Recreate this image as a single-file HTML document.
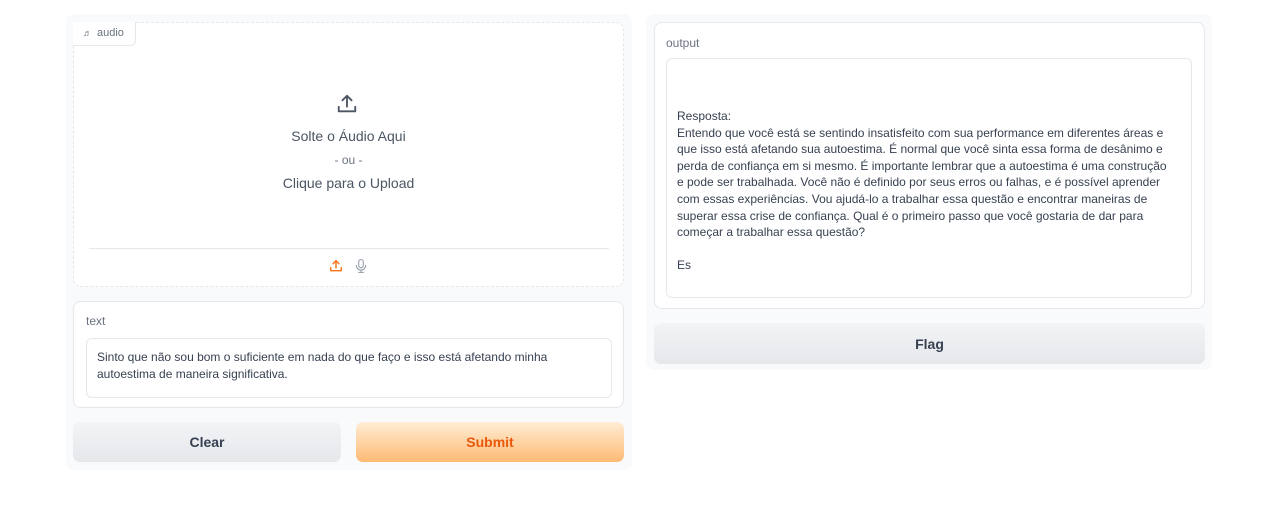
<!DOCTYPE html>
<html><head><meta charset="utf-8"><style>
*{box-sizing:border-box;margin:0;padding:0}
body{width:1280px;height:512px;background:#fff;font-family:"Liberation Sans",sans-serif;color:#374151;position:relative;overflow:hidden}
.abs{position:absolute}
.panel{background:#f9fafb;border-radius:8px}
.box{background:#fff;border:1px solid #e5e7eb;border-radius:8px}
.lbl{font-size:12px;color:#6b7280}
.ta{background:#fff;border:1px solid #e5e7eb;border-radius:6px;font-size:12px;color:#374151;line-height:16.6px}
.btn{border-radius:7px;font-size:14px;font-weight:bold;display:flex;align-items:center;justify-content:center}
</style></head><body>
<div class="abs panel" style="left:66px;top:14px;width:566px;height:456px"></div>
<div class="abs panel" style="left:646px;top:14px;width:566px;height:356px"></div>

<div class="abs" style="left:73px;top:22px;width:551px;height:265px;background:#fff;border:1px dashed #e5e7eb;border-radius:8px"></div>
<div class="abs" style="left:73px;top:22px;width:63px;height:24px;background:#fff;border:1px solid #e5e7eb;border-radius:0 0 6px 0;border-top:none;border-left:none;font-size:11px;color:#6b7280;padding:5px 0 0 10px"><span style="font-size:9px;margin-right:5px">♬</span>audio</div>
<svg class="abs" style="left:336px;top:93px" width="22" height="22" viewBox="0 0 24 24" fill="none" stroke="#4b5563" stroke-width="2" stroke-linecap="round" stroke-linejoin="round"><path d="M3 15v5h18v-5M12 15V3M7 8l5-5 5 5"/></svg>
<div class="abs" style="left:73px;top:125px;width:551px;text-align:center;font-size:14px;color:#4b5563;line-height:23px">Solte o Áudio Aqui<br><span style="font-size:12px;color:#6b7280">- ou -</span><br>Clique para o Upload</div>
<div class="abs" style="left:89px;top:248px;width:520px;height:1px;background:#e5e7eb"></div>
<svg class="abs" style="left:329px;top:259px" width="14" height="14" viewBox="0 0 24 24" fill="none" stroke="#f97316" stroke-width="2.5" stroke-linecap="round" stroke-linejoin="round"><path d="M3 15v5h18v-5M12 15V3M7 8l5-5 5 5"/></svg>
<svg class="abs" style="left:354px;top:258px" width="14" height="16" viewBox="0 0 24 26" fill="none" stroke="#9ca3af" stroke-width="2" stroke-linecap="round"><rect x="8" y="2" width="8" height="14" rx="4"/><path d="M4 12a8 8 0 0 0 16 0M12 20v4M8 24h8"/></svg>

<div class="abs box" style="left:73px;top:301px;width:551px;height:107px"></div>
<div class="abs lbl" style="left:86px;top:314px">text</div>
<div class="abs ta" style="left:86px;top:338px;width:526px;height:60px;padding:10px 10px">Sinto que não sou bom o suficiente em nada do que faço e isso está afetando minha autoestima de maneira significativa.</div>

<div class="abs btn" style="left:73px;top:422px;width:268px;height:40px;background:linear-gradient(#f3f4f6,#e5e7eb);color:#374151">Clear</div>
<div class="abs btn" style="left:356px;top:422px;width:268px;height:40px;background:linear-gradient(#ffedd5,#fdba74);color:#ea580c">Submit</div>

<div class="abs box" style="left:654px;top:22px;width:551px;height:287px"></div>
<div class="abs lbl" style="left:666px;top:36px">output</div>
<div class="abs ta" style="left:666px;top:58px;width:526px;height:240px;padding:49px 16px 0 10px">Resposta:<br>Entendo que você está se sentindo insatisfeito com sua performance em diferentes áreas e que isso está afetando sua autoestima. É normal que você sinta essa forma de desânimo e perda de confiança em si mesmo. É importante lembrar que a autoestima é uma construção e pode ser trabalhada. Você não é definido por seus erros ou falhas, e é possível aprender com essas experiências. Vou ajudá-lo a trabalhar essa questão e encontrar maneiras de superar essa crise de confiança. Qual é o primeiro passo que você gostaria de dar para começar a trabalhar essa questão?<br><br>Es</div>
<div class="abs btn" style="left:654px;top:323px;width:551px;height:41px;background:linear-gradient(#f3f4f6,#e5e7eb);color:#374151">Flag</div>
</body></html>
